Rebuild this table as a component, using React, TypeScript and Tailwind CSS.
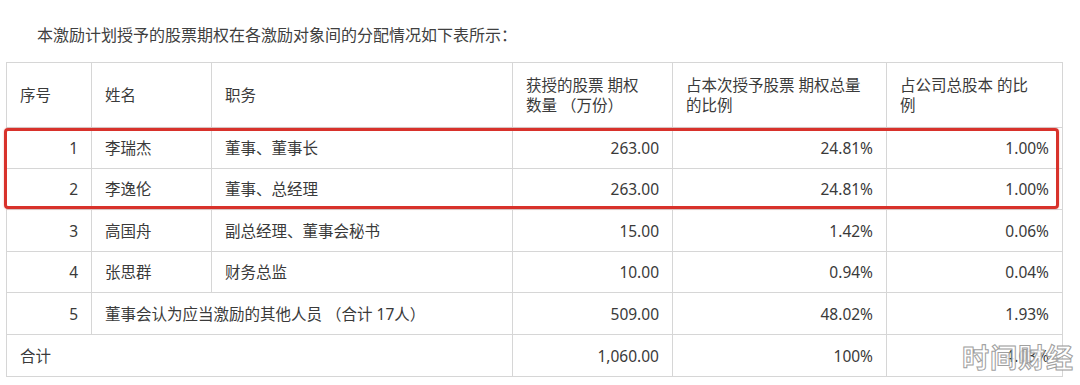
const rows = [
  { no: '1', name: '李瑞杰', title: '董事、董事长', qty: '263.00', pctGrant: '24.81%', pctTotal: '1.00%', h: 'h-[41px]' },
  { no: '2', name: '李逸伦', title: '董事、总经理', qty: '263.00', pctGrant: '24.81%', pctTotal: '1.00%', h: 'h-[41px]' },
  { no: '3', name: '高国舟', title: '副总经理、董事会秘书', qty: '15.00', pctGrant: '1.42%', pctTotal: '0.06%', h: 'h-[42px]' },
  { no: '4', name: '张思群', title: '财务总监', qty: '10.00', pctGrant: '0.94%', pctTotal: '0.04%', h: 'h-[41px]' },
];

const cell = 'border border-[#d6d6d6] px-[13px] align-middle';

export default function App() {
  return (
    <div
      className="w-[1080px] h-[385px] bg-white text-[#3a3a3a] text-[15.5px] overflow-hidden"
      style={{ fontFamily: '"Noto Sans", "Noto Sans CJK SC", sans-serif' }}
    >
      <p className="pt-[23px] pl-[37px] text-[16px] leading-[24px] text-[#404040]">
        本激励计划授予的股票期权在各激励对象间的分配情况如下表所示：
      </p>

      <div className="relative ml-[6px] mt-[15px] w-[1056px]">
        <table className="w-[1056px] table-fixed border-collapse leading-[20px]">
          <colgroup>
            <col className="w-[85px]" />
            <col className="w-[120px]" />
            <col className="w-[301px]" />
            <col className="w-[160px]" />
            <col className="w-[214px]" />
            <col className="w-[176px]" />
          </colgroup>
          <thead>
            <tr className="h-[65px]">
              <th className={`${cell} text-left font-normal`}>序号</th>
              <th className={`${cell} text-left font-normal`}>姓名</th>
              <th className={`${cell} text-left font-normal`}>职务</th>
              <th className={`${cell} text-left font-normal`}>
                获授的股票 期权
                <br />
                数量 （万份）
              </th>
              <th className={`${cell} text-left font-normal`}>
                占本次授予股票 期权总量
                <br />
                的比例
              </th>
              <th className={`${cell} text-left font-normal`}>
                占公司总股本 的比
                <br />
                例
              </th>
            </tr>
          </thead>
          <tbody>
            {rows.map(r => (
              <tr key={r.no} className={r.h}>
                <td className={`${cell} text-right`}>{r.no}</td>
                <td className={cell}>{r.name}</td>
                <td className={cell}>{r.title}</td>
                <td className={`${cell} text-right`}>{r.qty}</td>
                <td className={`${cell} text-right`}>{r.pctGrant}</td>
                <td className={`${cell} text-right`}>{r.pctTotal}</td>
              </tr>
            ))}
            <tr className="h-[42px]">
              <td className={`${cell} text-right`}>5</td>
              <td className={cell} colSpan={2}>董事会认为应当激励的其他人员 （合计 17人）</td>
              <td className={`${cell} text-right`}>509.00</td>
              <td className={`${cell} text-right`}>48.02%</td>
              <td className={`${cell} text-right`}>1.93%</td>
            </tr>
            <tr className="h-[42px]">
              <td className={cell} colSpan={3}>合计</td>
              <td className={`${cell} text-right`}>1,060.00</td>
              <td className={`${cell} text-right`}>100%</td>
              <td className={`${cell} text-right`}>4.03%</td>
            </tr>
          </tbody>
        </table>

        {/* red highlight around rows 1-2 */}
        <div className="absolute left-[-2px] top-[66px] w-[1055px] h-[81px] rounded-[4px] border-[3px] border-[#d8322b] shadow-[0_0_2px_rgba(216,50,43,0.4)] pointer-events-none" />

        {/* watermark */}
        <div
          className="absolute right-[-12px] bottom-[4px] text-[27px] leading-[32px] font-bold tracking-[1px] text-white/85 [-webkit-text-stroke:1px_#a0a0a0] pointer-events-none"
          style={{ fontFamily: '"Noto Sans CJK SC", sans-serif' }}
        >
          时间财经
        </div>
      </div>
    </div>
  );
}
